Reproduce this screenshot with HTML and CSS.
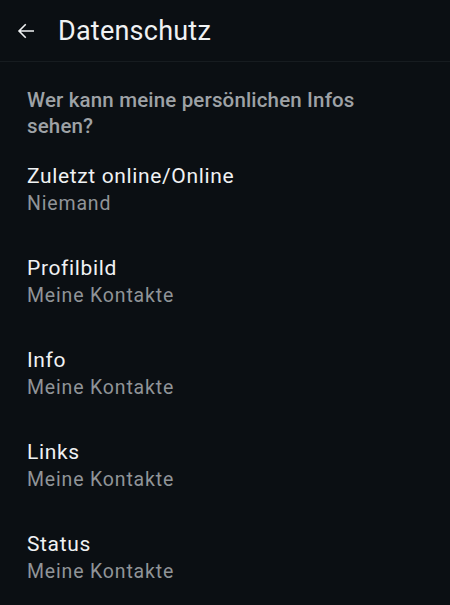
FILE: index.html
```html
<!DOCTYPE html>
<html lang="de">
<head>
<meta charset="utf-8">
<link rel="stylesheet" href="styles.css">
</head>
<body>
<header class="appbar">
  <svg class="back" width="24" height="24" viewBox="0 0 24 24"><path d="M20 11.2H6.9l5.4-5.4-1.1-1.1L3.9 12l7.3 7.3 1.1-1.1-5.4-5.4H20z" fill="#f0f2f3"/></svg>
  <h1 class="title">Datenschutz</h1>
</header>
<main>
  <div class="section">Wer kann meine persönlichen Infos sehen?</div>
  <div class="item"><div class="primary">Zuletzt online/Online</div><div class="secondary">Niemand</div></div>
  <div class="item"><div class="primary">Profilbild</div><div class="secondary">Meine Kontakte</div></div>
  <div class="item"><div class="primary">Info</div><div class="secondary">Meine Kontakte</div></div>
  <div class="item"><div class="primary">Links</div><div class="secondary">Meine Kontakte</div></div>
  <div class="item"><div class="primary">Status</div><div class="secondary">Meine Kontakte</div></div>
</main>
</body>
</html>
```
FILE: styles.css
```css
html, body {
  margin: 0;
  padding: 0;
  background: #0b0f13;
  font-family: Roboto, "Noto Sans", sans-serif;
  color: #f0f2f3;
}
.appbar {
  height: 62px;
  display: flex;
  align-items: center;
  padding-left: 14px;
  border-bottom: 1px solid #171c20;
  box-sizing: border-box;
}
.back {
  width: 24px;
  height: 24px;
  margin-right: 20px;
}
.title {
  margin: 0;
  font-size: 27px;
  font-weight: 400;
  line-height: 32px;
  letter-spacing: 0.23px;
}
.section {
  padding: 25px 80px 5px 27px;
  font-size: 20.5px;
  line-height: 26px;
  color: #9ea2a6;
  font-weight: 500;
  letter-spacing: 0.16px;
}
.item {
  padding: 18px 27px;
}
.primary {
  font-size: 21px;
  line-height: 28px;
  letter-spacing: 0.64px;
}
.secondary {
  font-size: 19.5px;
  line-height: 28px;
  color: #909498;
  letter-spacing: 0.83px;
}
```
